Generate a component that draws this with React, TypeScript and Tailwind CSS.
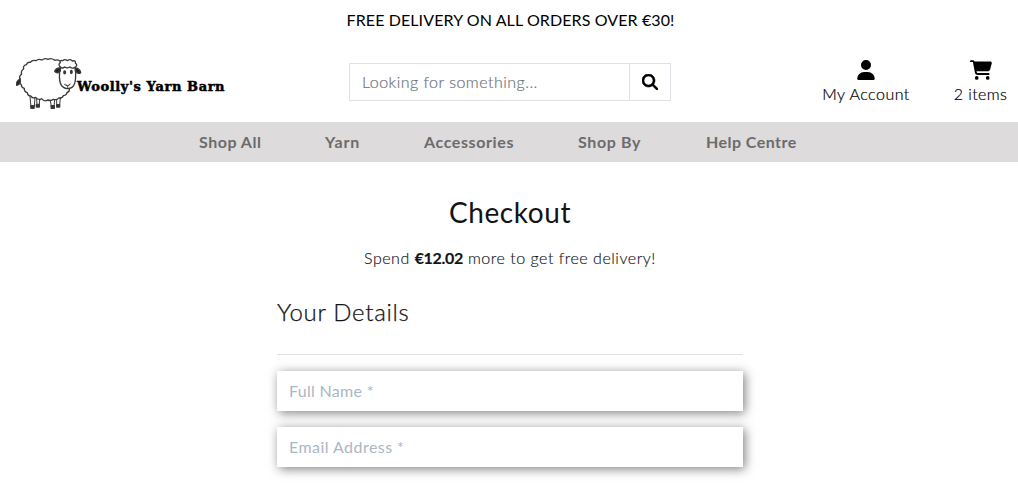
import React from "react";
import { FaUser, FaCartShopping, FaMagnifyingGlass } from "react-icons/fa6";

function Sheep() {
  return (
    <svg width="67" height="54" viewBox="45 36 201 162" fill="none" stroke="#3a3a3a" strokeWidth="4" strokeLinecap="round" strokeLinejoin="round" className="shrink-0">
      <path d="M180 48 Q172 42 164 46 Q154 38 144 43 Q134 38 126 45 Q115 40 108 47 Q97 44 91 52 Q82 50 79 59 Q68 62 71 72 Q61 77 65 87 Q55 95 61 103 Q56 113 64 119 Q64 128 73 130 Q72 141 82 143 Q83 153 92 153 Q99 162 107 157 Q116 167 124 161 Q134 172 143 165 Q154 169 160 163 Q172 166 176 159 Q187 160 190 152 Q201 151 201 142 Q209 141 208 132" />
      <path d="M90 156 L93 184 M105 158 L103 184 M110 161 L111 182 M119 163 L118 180 M151 166 L154 184 M164 165 L162 184 M170 163 L170 180 M181 159 L179 180" strokeWidth="3" />
      <path d="M92 182L93 190 H102 L103 182Z M109 178V186H118L118 178Z M153 182L154 190H163L163 182Z M170 179V186H179L179 179Z" fill="#2e2e2e" />
      <path d="M60 102 Q48 108 50 121 Q59 121 61 108Z" fill="#222" />
      <path d="M181 66 C178 83 177 107 183 119 C191 134 212 135 221 122 C230 108 227 80 226 67" fill="white" />
      <path d="M181 66 Q173 58 181 53 Q178 45 188 47 Q195 41 202 47 Q211 40 217 48 Q228 45 226 54 Q235 61 225 67 Q217 72 210 66 Q201 71 194 66 Q187 72 181 66Z" fill="white" />
      <path d="M181 69 Q168 68 164 79 Q172 88 181 78Z M226 69 Q240 71 242 83 Q235 89 226 78Z" fill="#222" />
      <ellipse cx="194" cy="82" rx="2.5" ry="4.5" fill="#222" />
      <ellipse cx="214" cy="81" rx="2.5" ry="4.5" fill="#222" />
      <path d="M193 118 Q202 127 211 118 M197 118 L203 123 L209 118 M203 123 V130" strokeWidth="2.5" />
    </svg>
  );
}

const links = [
  { label: "Shop All", box: "ml-[199px] w-[126px] tracking-[0.5px]" },
  { label: "Yarn", box: "w-[99px] tracking-[0.9px]" },
  { label: "Accessories", box: "w-[154px] tracking-[0.6px]" },
  { label: "Shop By", box: "w-[128px] tracking-[0.65px]" },
  { label: "Help Centre", box: "tracking-[0.45px]" },
];

export default function App() {
  return (
    <div className="h-[499px] overflow-hidden bg-white font-['Lato','Liberation_Sans',sans-serif] text-base leading-6 text-[#111315]">
      <div className="flex h-[41px] items-center justify-center pb-[2px] pl-[3px] whitespace-nowrap text-black">
        <span className="tracking-[0.1px]">FREE DELIVERY ON ALL ORDERS OVER €30!</span>
      </div>

      <header className="flex h-[81px]">
        <a className="flex w-[349px] pt-4 pl-[15px]">
          <Sheep />
          <span className="-ml-[5px] pt-[18px] font-['DejaVu_Serif','Liberation_Serif',serif] text-[13px] font-bold tracking-[0.6px] whitespace-nowrap text-black [-webkit-text-stroke:0.5px_black]">Woolly's Yarn Barn</span>
        </a>
        <form className="mt-[22px] flex h-[38px] w-[322px] border border-[#dee2e6]">
          <input
            placeholder="Looking for something..."
            className="w-[280px] border-r border-[#dee2e6] px-3 font-light tracking-[0.48px] outline-none [-webkit-text-stroke:0.2px_#6c757d] placeholder:text-[#6c757d]"
          />
          <button type="button" className="flex flex-1 items-center justify-center text-black">
            <FaMagnifyingGlass size={16} stroke="black" strokeWidth={20} />
          </button>
        </form>
        <div className="mt-[19px] ml-auto flex font-light text-black">
          <a className="mr-[44px] flex w-[88px] flex-col items-center whitespace-nowrap">
            <FaUser size={20} />
            <span className="mt-[2px] tracking-[0.5px] [-webkit-text-stroke:0.2px]">My Account</span>
          </a>
          <a className="mr-[11px] flex w-[53px] flex-col items-center whitespace-nowrap">
            <FaCartShopping size={22} className="-mt-px" />
            <span className="mt-px tracking-[0.4px] [-webkit-text-stroke:0.2px]">2 items</span>
          </a>
        </div>
      </header>

      <nav className="flex h-10 items-center bg-[#dddbdc] font-bold whitespace-nowrap text-[#6c6b6b]">
        {links.map((l) => (
          <a key={l.label} className={l.box}>{l.label}</a>
        ))}
      </nav>

      <main className="mx-auto w-[466px] translate-x-px">
        <h1 className="pt-[33px] text-center text-[28px] leading-[34px] tracking-[0.6px]">Checkout</h1>
        <p className="mt-[17px] text-center font-light tracking-[0.52px] whitespace-nowrap [-webkit-text-stroke:0.15px]">
          Spend <strong className="font-bold tracking-[-0.3px]">€12.02</strong> more to get free delivery!
        </p>
        <h2 className="mt-[27px] text-2xl leading-[29px] font-light tracking-[0.7px] [-webkit-text-stroke:0.25px]">Your Details</h2>
        <hr className="mt-[28px] border-t border-[#dee0e2]" />
        <form className="mt-4 flex flex-col gap-4">
          <input placeholder="Full Name *" className="h-10 bg-white px-3 pb-[2px] tracking-[0.3px] shadow-[2px_2px_10px_rgba(0,0,0,0.5)] outline-none placeholder:text-[#aab7c4]" />
          <input placeholder="Email Address *" className="h-10 bg-white px-3 pb-[2px] tracking-[0.45px] shadow-[2px_2px_10px_rgba(0,0,0,0.5)] outline-none placeholder:text-[#aab7c4]" />
        </form>
      </main>
    </div>
  );
}
